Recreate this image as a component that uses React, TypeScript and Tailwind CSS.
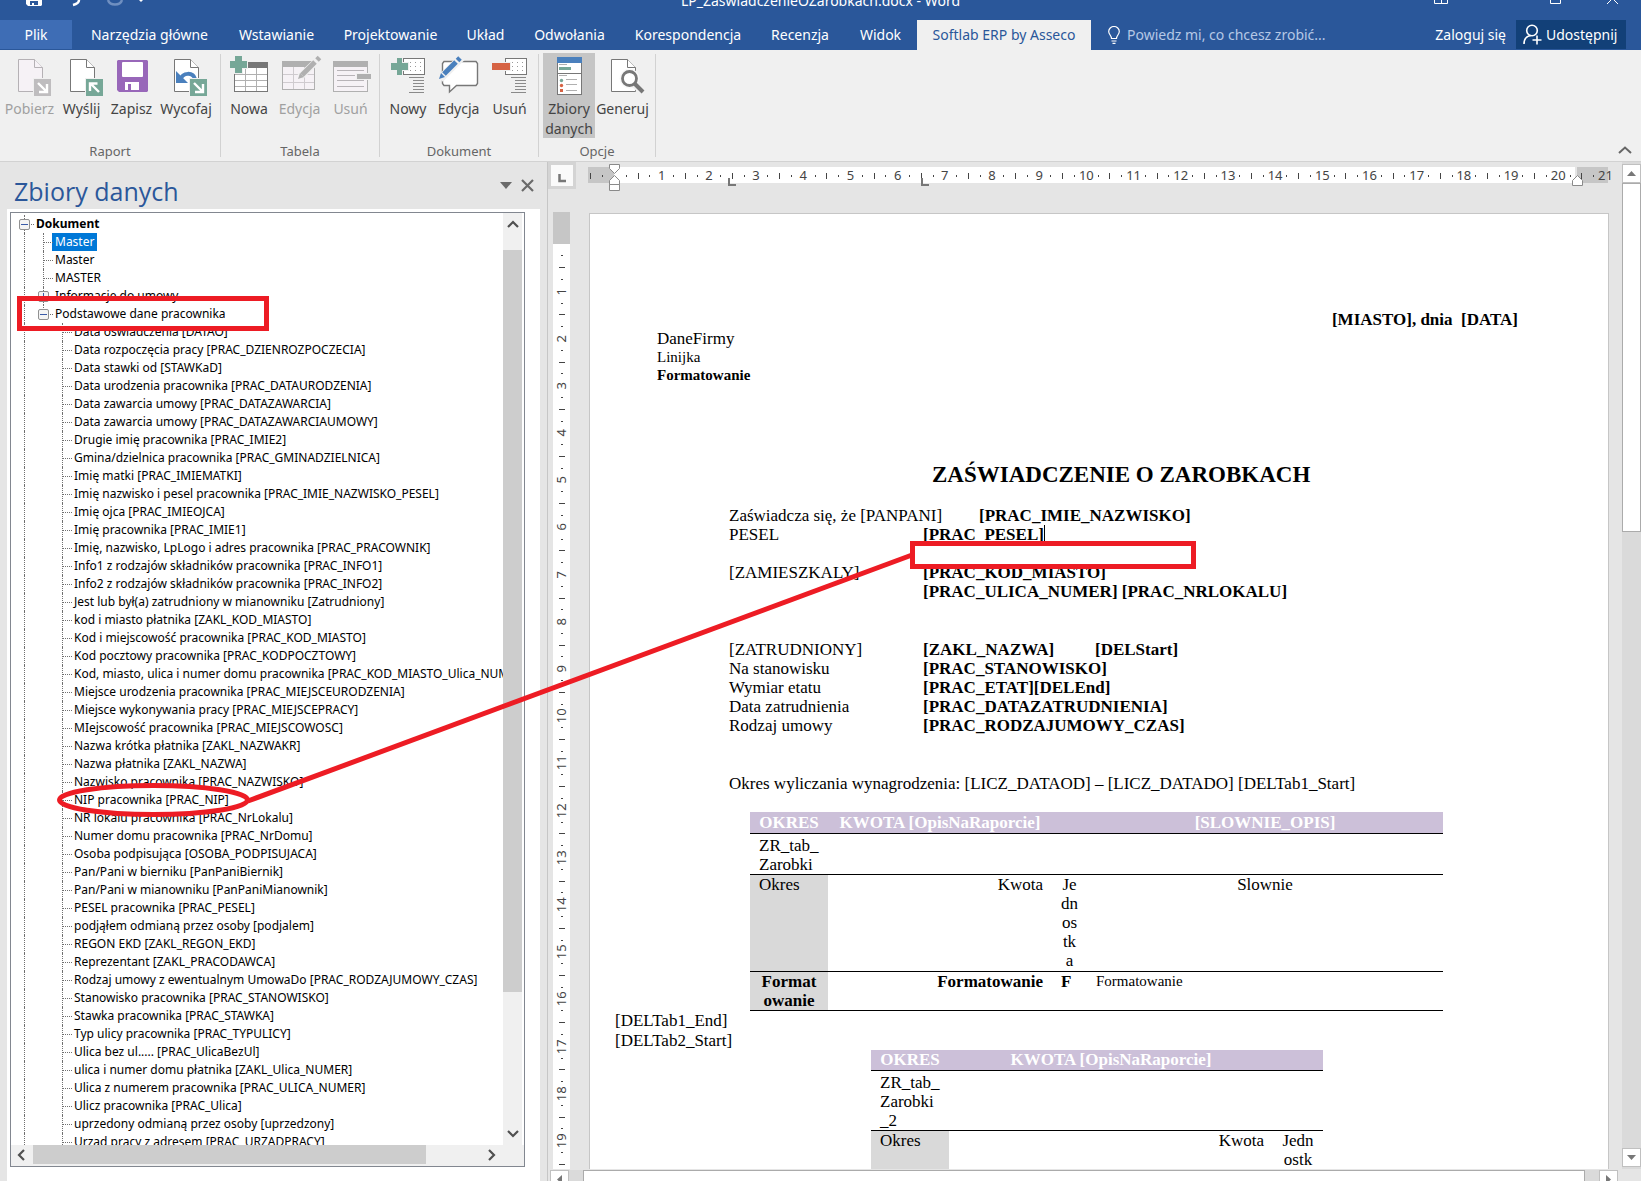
import { useState, type ReactNode } from "react";
import clsx from "clsx";

const ribbonTabs = [
  { name: "Narzędzia główne", width: "w-[149px]" },
  { name: "Wstawianie", width: "w-[105px]" },
  { name: "Projektowanie", width: "w-[123px]" },
  { name: "Układ", width: "w-[67px]" },
  { name: "Odwołania", width: "w-[101px]" },
  { name: "Korespondencja", width: "w-[136px]" },
  { name: "Recenzja", width: "w-[88px]" },
  { name: "Widok", width: "w-[73px]" },
];

const fields = [
  "Data oświadczenia [DATAO]",
  "Data rozpoczęcia pracy [PRAC_DZIENROZPOCZECIA]",
  "Data stawki od [STAWKaD]",
  "Data urodzenia pracownika [PRAC_DATAURODZENIA]",
  "Data zawarcia umowy [PRAC_DATAZAWARCIA]",
  "Data zawarcia umowy [PRAC_DATAZAWARCIAUMOWY]",
  "Drugie imię pracownika [PRAC_IMIE2]",
  "Gmina/dzielnica pracownika [PRAC_GMINADZIELNICA]",
  "Imię matki [PRAC_IMIEMATKI]",
  "Imię nazwisko i pesel pracownika [PRAC_IMIE_NAZWISKO_PESEL]",
  "Imię ojca [PRAC_IMIEOJCA]",
  "Imię pracownika [PRAC_IMIE1]",
  "Imię, nazwisko, LpLogo i adres pracownika [PRAC_PRACOWNIK]",
  "Info1 z rodzajów składników pracownika [PRAC_INFO1]",
  "Info2 z rodzajów składników pracownika [PRAC_INFO2]",
  "Jest lub był(a) zatrudniony w mianowniku [Zatrudniony]",
  "kod i miasto płatnika [ZAKL_KOD_MIASTO]",
  "Kod i miejscowość pracownika [PRAC_KOD_MIASTO]",
  "Kod pocztowy pracownika [PRAC_KODPOCZTOWY]",
  "Kod, miasto, ulica i numer domu pracownika [PRAC_KOD_MIASTO_Ulica_NUMER]",
  "Miejsce urodzenia pracownika [PRAC_MIEJSCEURODZENIA]",
  "Miejsce wykonywania pracy [PRAC_MIEJSCEPRACY]",
  "MIejscowość pracownika [PRAC_MIEJSCOWOSC]",
  "Nazwa krótka płatnika [ZAKL_NAZWAKR]",
  "Nazwa płatnika [ZAKL_NAZWA]",
  "Nazwisko pracownika [PRAC_NAZWISKO]",
  "NIP pracownika [PRAC_NIP]",
  "NR lokalu pracownika [PRAC_NrLokalu]",
  "Numer domu pracownika [PRAC_NrDomu]",
  "Osoba podpisująca [OSOBA_PODPISUJACA]",
  "Pan/Pani w bierniku [PanPaniBiernik]",
  "Pan/Pani w mianowniku [PanPaniMianownik]",
  "PESEL pracownika [PRAC_PESEL]",
  "podjąłem odmianą przez osoby [podjalem]",
  "REGON EKD [ZAKL_REGON_EKD]",
  "Reprezentant [ZAKL_PRACODAWCA]",
  "Rodzaj umowy z ewentualnym UmowaDo [PRAC_RODZAJUMOWY_CZAS]",
  "Stanowisko pracownika [PRAC_STANOWISKO]",
  "Stawka pracownika [PRAC_STAWKA]",
  "Typ ulicy pracownika [PRAC_TYPULICY]",
  "Ulica bez ul..... [PRAC_UlicaBezUl]",
  "ulica i numer domu płatnika [ZAKL_Ulica_NUMER]",
  "Ulica z numerem pracownika [PRAC_ULICA_NUMER]",
  "Ulicz pracownika [PRAC_Ulica]",
  "uprzedony odmianą przez osoby [uprzedzony]",
  "Urząd pracy z adresem [PRAC_URZADPRACY]",
];

/* ---------- icons ---------- */

function Icon({ children }: { children: ReactNode }) {
  return (
    <svg width="40" height="40" viewBox="0 0 40 40" fill="none" className="shrink-0 overflow-visible" aria-hidden="true">
      {children}
    </svg>
  );
}

function Sheet({ stroke = "#777777", fill = "#ffffff" }) {
  return (
    <g stroke={stroke} fill={fill}>
      <path d="M8.5 2.5h16l8 8v24h-24z" />
      <path d="M24.5 2.5v8h8" />
    </g>
  );
}

function ArrowBadge({ up = false, fill = "#76a797" }) {
  return (
    <g>
      <rect x="23" y="21" width="19" height="19" fill="#f0f0f0" />
      <rect x="24" y="22" width="17" height="17" fill={fill} />
      {up ? (
        <path d="M37 35l-8-8M28 34v-7.500h7.500" stroke="#fff" strokeWidth="2.400" />
      ) : (
        <path d="M28 26l8 8M37 27v8h-8" stroke="#fff" strokeWidth="2.400" />
      )}
    </g>
  );
}

const PobierzIcon = () => (
  <Icon>
    <Sheet stroke="#b5b1b5" fill="#f6f2f6" />
    <ArrowBadge fill="#bfbdbf" />
  </Icon>
);

const WyslijIcon = () => (
  <Icon>
    <Sheet />
    <ArrowBadge up />
  </Icon>
);

const ZapiszIcon = () => (
  <Icon>
    <path d="M6 3h29l1 1v30l-1 1H7l-2-2V4z" fill="#9867b9" />
    <rect x="10" y="5" width="21" height="15" rx="1" fill="#fff" />
    <path d="M13 25h14v8h-8v-6h-3v6h-3z" fill="#fff" />
  </Icon>
);

const WycofajIcon = () => (
  <Icon>
    <Sheet />
    <path d="M14 23c3-8 13-8 15-1" stroke="#4a80bd" strokeWidth="4" />
    <path d="M10 14v12h12z" fill="#4a80bd" />
    <ArrowBadge />
  </Icon>
);

const NowaIcon = () => (
  <Icon>
    <rect x="5.500" y="5.500" width="33" height="29" fill="#fff" stroke="#777" />
    <rect x="5" y="5" width="34" height="6" fill="#777" />
    <path d="M6 17.500h32M6 23.500h32M6 29.500h32M16.500 11v23M27.500 11v23" stroke="#b0b0b0" />
    <path d="M0 3h5v-5h9v5h5v9h-5v5H5v-5H0z" fill="#f0f0f0" />
    <path d="M1 4h5v-5h7v5h5v7h-5v5H6v-5H1z" fill="#76a797" />
  </Icon>
);

const EdycjaTabeliIcon = () => (
  <Icon>
    <rect x="2.500" y="4.500" width="32" height="28" fill="#f6f2f6" stroke="#b0b0b0" />
    <rect x="2" y="4" width="33" height="6" fill="#b0b0b0" />
    <path d="M3 17.500h31M3 25.500h31M13.500 10v22M24.500 10v22" stroke="#cfcbcf" />
    <path d="M20 20L40 1" stroke="#f0f0f0" strokeWidth="7" />
    <path d="M22 18L35 5M37 3l2.500-2.500" stroke="#b0b0b0" strokeWidth="5" />
    <path d="M18 22l2-6 4 4z" fill="#b0b0b0" />
  </Icon>
);

const UsunTabeleIcon = () => (
  <Icon>
    <rect x="2.500" y="4.500" width="34" height="30" fill="#f6f2f6" stroke="#b0b0b0" />
    <rect x="2" y="4" width="35" height="6" fill="#b0b0b0" />
    <path d="M6 13.500h27M6 18.500h18M6 23.500h27M6 29.500h27" stroke="#b8b4b8" />
    <rect x="25" y="16" width="16" height="7" fill="#f0f0f0" />
    <rect x="26" y="17" width="14" height="5" fill="#b0b0b0" />
  </Icon>
);

function Paragraph() {
  return (
    <g>
      <rect x="15.500" y="1.500" width="21" height="16" fill="#fff" stroke="#777" />
      <path d="M22 5.500h13M22 9.500h13M22 13.500h13" stroke="#999" strokeDasharray="1 4" />
      <path d="M21 20.500h15M25 23.500h11M25 26.500h11M25 29.500h11M25 32.500h11M21 35.500h15" stroke="#8a8a8a" />
    </g>
  );
}

const NowyIcon = () => (
  <Icon>
    <Paragraph />
    <path d="M2 5h6V0h7v5h6v9h-6v5H8v-5H2z" fill="#f0f0f0" />
    <path d="M3 6h6V1h5v5h6v7h-6v5H9v-5H3z" fill="#76a797" />
  </Icon>
);

const EdycjaIcon = () => (
  <Icon>
    <path d="M5 4.500h32l1.500 2v20l-1.500 2H17.500l-7 6.500v-6.500H5l-1.500-2v-20z" fill="#fff" stroke="#777" strokeWidth="1.400" />
    <path d="M1 22L23 0" stroke="#f0f0f0" strokeWidth="8" />
    <path d="M5 17L17 5M18.500 3.500L21 1" stroke="#4a80bd" strokeWidth="5" />
    <path d="M0 22l2-6 4 4z" fill="#4a80bd" />
  </Icon>
);

const UsunIcon = () => (
  <Icon>
    <Paragraph />
    <rect x="1" y="5" width="20" height="9" fill="#f0f0f0" />
    <rect x="2" y="6" width="18" height="7" fill="#d66344" />
  </Icon>
);

const ZbioryIcon = () => (
  <Icon>
    <rect x="8.500" y=".5" width="24" height="37" fill="#fff" stroke="#777" />
    <rect x="8" y="0" width="25" height="6" fill="#4a80bd" />
    <path d="M10 7.500h8M10 18.500h8M17 22.500h11M17 27.500h11M17 33.500h11" stroke="#b0b0b0" />
    <path d="M9 16.500h23" stroke="#777" />
    <rect x="10" y="10" width="12" height="3" fill="#76a797" />
    <circle cx="12.500" cy="23.500" r="1.700" fill="#76a797" />
    <circle cx="12.500" cy="28.500" r="1.700" fill="#d66344" />
    <rect x="11" y="32" width="3" height="3" fill="#d66344" />
  </Icon>
);

const GenerujIcon = () => (
  <Icon>
    <Sheet />
    <circle cx="26.500" cy="21.500" r="10" fill="#f8f8f8" />
    <path d="M31 27l9 8.500" stroke="#f0f0f0" strokeWidth="7" />
    <circle cx="26.500" cy="21.500" r="7" fill="#fff" stroke="#777" strokeWidth="2.800" />
    <path d="M31.500 26.500l8.500 8.500" stroke="#777" strokeWidth="4" />
  </Icon>
);

/* ---------- title bar and ribbon ---------- */

function TitleBar() {
  return (
    <div className="relative flex h-5 items-start justify-between text-white">
      <svg width="160" height="8" viewBox="0 0 160 8" fill="none" className="ml-[24px]" aria-hidden="true">
        <path d="M2 0h16v5l-1 1H4L2 4z" fill="#fff" />
        <path d="M6 1h8v4h-4V3H8v2H6z" fill="#2a579a" />
        <path d="M55 0c0 2-2 4-6 5" stroke="#fff" strokeWidth="2.500" />
        <path d="M84 0c2 6 12 6 14 0" stroke="#6f8fc0" strokeWidth="2.500" />
        <path d="M115 0h4l-2 2z" fill="#fff" />
      </svg>
      <div className="absolute inset-x-0 -top-[9px] text-center text-sm leading-[20px]">LP_ZaświadczenieOZarobkach.docx - Word</div>
      <svg width="190" height="6" viewBox="0 0 190 6" fill="none" stroke="#fff" className="mr-[19px]" aria-hidden="true">
        <path d="M2.500 0v3.500h13V0M9.500 0v3M118.500 0v3.500h10V0M175 4l5.500-5.500L186 4" />
      </svg>
    </div>
  );
}

function TabBar() {
  return (
    <nav className="flex h-[30px] items-stretch text-sm text-white">
      <button className="mb-px w-[72px] bg-[#3e6db5]">Plik</button>
      <div className="flex pl-[3px]">
        {ribbonTabs.map((t) => (
          <button key={t.name} className={clsx("whitespace-nowrap text-center", t.width)}>{t.name}</button>
        ))}
        <button className="w-[174px] whitespace-nowrap bg-[#f0f0f0] text-[#2a579a]">Softlab ERP by Asseco</button>
      </div>
      <label className="flex flex-1 items-center gap-[7px] pl-[17px]">
        <svg width="12" height="18" viewBox="0 0 12 18" fill="none" stroke="#fff" aria-label="Powiedz mi">
          <path d="M3.500 12.500C3.500 9.500.7 8.500.7 5.500a5.300 5 0 0110.600 0c0 3-2.800 4-2.800 7zM3.500 15h5M4.500 17.300h3" strokeWidth="1.200" />
        </svg>
        <input placeholder="Powiedz mi, co chcesz zrobić..." className="min-w-0 flex-1 bg-transparent outline-none placeholder:text-[#b5c8e6]" />
      </label>
      <button className="mr-[10px] whitespace-nowrap">Zaloguj się</button>
      <button className="mr-[15px] mb-px flex w-[110px] items-center gap-[3px] bg-[#124078] pl-[7px]">
        <svg width="20" height="21" viewBox="0 0 20 21" fill="none" stroke="#fff" strokeWidth="1.600" aria-hidden="true">
          <circle cx="9" cy="6.500" r="5.300" />
          <path d="M1 20c0-5 3-8 7-8.500M14 11.500v9M9.500 16h9" />
        </svg>
        Udostępnij
      </button>
    </nav>
  );
}

function RibbonButton({ icon, label, width, disabled, pressed }: { icon: ReactNode; label: string; width: string; disabled?: boolean; pressed?: boolean }) {
  return (
    <button
      disabled={disabled}
      aria-pressed={pressed}
      className={clsx("flex h-[85px] flex-col items-center pt-1 text-sm leading-[20px]", width, disabled ? "text-[#a0a0a0]" : "text-[#444444]", pressed && "bg-[#c5c5c5]")}
    >
      {icon}
      <span className="pt-[2px]">{label}</span>
    </button>
  );
}

function RibbonGroup({ name, className, children }: { name: string; className: string; children: ReactNode }) {
  return (
    <div className={clsx("my-1 flex flex-col justify-between border-r border-[#d2d2d2]", className)}>
      <div className="-mt-px flex">{children}</div>
      <div className="text-center text-[13px] leading-[12px] text-[#666666]">{name}</div>
    </div>
  );
}

function Ribbon() {
  return (
    <div className="flex h-[112px] border-b border-[#d2d2d2] bg-[#f0f0f0]">
      <RibbonGroup name="Raport" className="w-[221px] px-[3px]">
        <RibbonButton icon={<PobierzIcon />} label="Pobierz" width="w-[53px]" disabled />
        <RibbonButton icon={<WyslijIcon />} label="Wyślij" width="w-[51px]" />
        <RibbonButton icon={<ZapiszIcon />} label="Zapisz" width="w-[49px]" />
        <RibbonButton icon={<WycofajIcon />} label="Wycofaj" width="w-[60px]" />
      </RibbonGroup>
      <RibbonGroup name="Tabela" className="w-[159px] px-[3px]">
        <RibbonButton icon={<NowaIcon />} label="Nowa" width="w-[50px]" />
        <RibbonButton icon={<EdycjaTabeliIcon />} label="Edycja" width="w-[51px]" disabled />
        <RibbonButton icon={<UsunTabeleIcon />} label="Usuń" width="w-[51px]" disabled />
      </RibbonGroup>
      <RibbonGroup name="Dokument" className="w-[159px] px-[3px]">
        <RibbonButton icon={<NowyIcon />} label="Nowy" width="w-[50px]" />
        <RibbonButton icon={<EdycjaIcon />} label="Edycja" width="w-[51px]" />
        <RibbonButton icon={<UsunIcon />} label="Usuń" width="w-[51px]" />
      </RibbonGroup>
      <RibbonGroup name="Opcje" className="w-[117px] px-1">
        <RibbonButton icon={<ZbioryIcon />} label="Zbiory danych" width="w-[52px]" pressed />
        <RibbonButton icon={<GenerujIcon />} label="Generuj" width="w-[55px]" />
      </RibbonGroup>
      <button aria-label="Zwiń wstążkę" className="mr-[9px] mb-[7px] ml-auto self-end">
        <svg width="14" height="8" viewBox="0 0 14 8" fill="none" stroke="#666" strokeWidth="2">
          <path d="M1 7l6-5.500L13 7" />
        </svg>
      </button>
    </div>
  );
}

/* ---------- data set pane ---------- */

// One 19px step of indentation with its dotted connector.
function Guide({ branch, half, toggle }: { branch?: boolean; half?: boolean; toggle?: "+" | "-" }) {
  return (
    <span className="relative flex w-[19px] shrink-0 pl-[9px]">
      <span className={clsx("border-l border-dotted border-[#707070]", half ? "h-[9px]" : "h-full")} />
      {branch && <span className="flex-1 self-center border-t border-dotted border-[#707070]" />}
      {toggle && (
        <button aria-label={toggle === "-" ? "Zwiń" : "Rozwiń"} className="absolute top-[4px] left-[4px] flex size-[11px] rounded-[2px] border border-[#919191] bg-[#f4f4f4]">
          <svg width="9" height="9" viewBox="0 0 9 9" stroke="#3a5ba8" aria-hidden="true">
            <path d={toggle === "-" ? "M1 4.500h7" : "M1 4.500h7M4.500 1v7"} />
          </svg>
        </button>
      )}
    </span>
  );
}

function TreeRow({ label, guides, selected, bold, onSelect }: { label: string; guides: ReactNode; selected?: boolean; bold?: boolean; onSelect?: () => void }) {
  return (
    <li role="treeitem" aria-selected={!!selected} className="flex h-[18px] whitespace-nowrap">
      {guides}
      <button onClick={onSelect} className={clsx("-ml-px px-[3px] leading-[18px]", selected ? "bg-[#0078d7] text-white" : "text-black", bold && "font-bold")}>
        {label}
      </button>
    </li>
  );
}

function Tree() {
  const [selected, setSelected] = useState(0);
  const heads = ["Master", "Master", "MASTER"];

  return (
    <ul role="tree" aria-label="Zbiory danych" className="min-w-0 flex-1 overflow-hidden pt-[2px] pl-1 text-xs">
      <TreeRow label="Dokument" bold guides={<Guide branch toggle="-" />} />
      {heads.map((h, i) => (
        <TreeRow key={i} label={h} selected={selected === i} onSelect={() => setSelected(i)} guides={<><Guide /><Guide branch /></>} />
      ))}
      <TreeRow label="Informacje do umowy" selected={selected === 3} onSelect={() => setSelected(3)} guides={<><Guide /><Guide branch toggle="+" /></>} />
      <TreeRow label="Podstawowe dane pracownika" selected={selected === 4} onSelect={() => setSelected(4)} guides={<><Guide /><Guide branch half toggle="-" /></>} />
      {fields.map((f, i) => (
        <TreeRow
          key={f}
          label={f}
          selected={selected === i + 5}
          onSelect={() => setSelected(i + 5)}
          guides={<><Guide /><span className="w-[19px] shrink-0" /><Guide branch /></>}
        />
      ))}
    </ul>
  );
}

function Chevron({ d }: { d: string }) {
  return (
    <svg width="12" height="12" viewBox="0 0 12 12" fill="none" stroke="#505050" strokeWidth="2.200" aria-hidden="true">
      <path d={d} />
    </svg>
  );
}

function DataPane() {
  return (
    <aside className="flex w-[548px] shrink-0 flex-col border-r border-[#c6c6c6] pr-[7px] pl-[7px]">
      <div className="flex h-[47px] shrink-0 items-start justify-between pl-[7px]">
        <h2 className="pt-[12px] font-['Open_Sans',sans-serif] text-[25px] leading-[34px] text-[#2b579a]">Zbiory danych</h2>
        <div className="flex items-center gap-[9px] pt-[17px] pr-[6px]">
          <button aria-label="Opcje okienka">
            <svg width="12" height="7" viewBox="0 0 12 7" fill="#6a6a6a"><path d="M0 0h12L6 7z" /></svg>
          </button>
          <button aria-label="Zamknij">
            <svg width="13" height="13" viewBox="0 0 13 13" stroke="#6a6a6a" strokeWidth="2.200"><path d="M1 1l11 11M12 1L1 12" /></svg>
          </button>
        </div>
      </div>
      <div className="flex min-h-0 flex-1 bg-white pt-[3px] pr-[15px] pb-[14px] pl-[3px]">
        <div className="flex min-w-0 flex-1 flex-col border border-[#828790]">
          <div className="flex min-h-0 flex-1 pr-[2px]">
            <Tree />
            <div className="flex w-[19px] flex-col items-center bg-[#f0f0f0]">
              <button aria-label="W górę" className="h-[37px] pb-4"><Chevron d="M1 9l5-5 5 5" /></button>
              <div className="h-[742px] w-full bg-[#cdcdcd]" />
              <button aria-label="W dół" className="mt-auto pb-[5px]"><Chevron d="M1 3l5 5 5-5" /></button>
            </div>
          </div>
          <div className="flex h-[21px] shrink-0 items-center bg-[#f0f0f0] pr-[27px] pb-[2px] pl-[5px]">
            <button aria-label="W lewo"><Chevron d="M8 1L3 6l5 5" /></button>
            <div className="ml-[5px] h-full w-[393px] bg-[#cdcdcd]" />
            <button aria-label="W prawo" className="ml-auto"><Chevron d="M4 1l5 5-5 5" /></button>
          </div>
        </div>
      </div>
    </aside>
  );
}

/* ---------- rulers ---------- */

// Quarter-centimetre marks; whole centimetres carry their number.
function marks(from: number, to: number) {
  const list: number[] = [];
  for (let q = from; q <= to; q++) list.push(q);
  return list;
}

function HorizontalRuler() {
  return (
    <div className="relative mt-[5px] flex h-4 w-[1027px] text-[13px] text-[#444444]">
      <div className="ml-[3px] w-[26px] bg-[#c6c6c6]" />
      <div className="flex-1 bg-white" />
      <div className="mr-[4px] ml-[2px] w-[31px] bg-[#c6c6c6]" />
      <div className="absolute inset-0 flex items-center pt-[2px]">
        {marks(-2, 84).map((q) => (
          <span key={q} className="flex min-w-0 flex-1 items-center justify-center">
            {q === 0 ? null : q % 4 === 0 ? <span>{q / 4}</span> : q % 2 === 0 ? <span className="h-[6px] w-px bg-[#444444]" /> : <span className="h-[2px] w-px bg-[#444444]" />}
          </span>
        ))}
      </div>
      <svg width="1027" height="30" viewBox="0 0 1027 30" className="absolute top-[-4px] left-0" fill="#fff" stroke="#8a8a8a" aria-hidden="true">
        <path d="M24.500 1.500h10v4l-5 5-5-5zM24.500 21.500v-4l5-5 5 5v4zM24.500 21.500h10v6h-10z" />
        <path d="M987.500 22.500v-5l5-5 5 5v5z" />
        <path d="M144 15v7h7M337 15v7h7" fill="none" stroke="#777" strokeWidth="2" />
      </svg>
    </div>
  );
}

function VerticalRuler() {
  return (
    <div className="flex w-[17px] flex-col bg-white text-[13px] text-[#444444]">
      <div className="mb-px h-8 shrink-0 bg-[#c6c6c6]" />
      <div className="mt-[5px] flex h-[920px] shrink-0 flex-col">
        {marks(1, 78).map((q) => (
          <span key={q} className="flex min-h-0 flex-1 items-center justify-center">
            {q % 4 === 0 ? <span className="-rotate-90">{q / 4}</span> : q % 2 === 0 ? <span className="h-px w-[6px] bg-[#444444]" /> : <span className="h-px w-[2px] bg-[#444444]" />}
          </span>
        ))}
      </div>
    </div>
  );
}

/* ---------- document ---------- */

function Line({ label, value, wide, children }: { label?: string; value?: string; wide?: boolean; children?: ReactNode }) {
  return (
    <div className="flex h-[19px]">
      <span className={clsx("shrink-0", wide ? "w-[250px]" : "w-[194px]")}>{label}</span>
      <b>{value}</b>
      {children}
    </div>
  );
}

function IncomeTable() {
  return (
    <table className="ml-[135px] w-[693px] table-fixed border-collapse text-center leading-[19px]">
      <colgroup>
        <col className="w-[78px]" />
        <col className="w-[224px]" />
        <col className="w-[35px]" />
        <col />
      </colgroup>
      <thead>
        <tr className="h-[21px] border-b border-black bg-[#ccc0d9] text-white">
          <th className="p-0">OKRES</th>
          <th className="p-0">KWOTA [OpisNaRaporcie]</th>
          <th className="p-0" />
          <th className="p-0">[SLOWNIE_OPIS]</th>
        </tr>
      </thead>
      <tbody className="align-top">
        <tr className="h-[41px] border-b border-black">
          <td className="px-[9px] pt-[2px] pb-0 text-left">ZR_tab_<br />Zarobki</td>
          <td colSpan={3} />
        </tr>
        <tr className="h-[97px] border-b border-black">
          <td className="bg-[#d9d9d9] px-[9px] text-left">Okres</td>
          <td className="px-[9px] text-right">Kwota</td>
          <td>Je<br />dn<br />os<br />tk<br />a</td>
          <td>Slownie</td>
        </tr>
        <tr className="h-[39px] border-b border-black font-bold">
          <td className="bg-[#d9d9d9]">Format<br />owanie</td>
          <td className="px-[9px] text-right">Formatowanie</td>
          <td className="px-[9px] text-left">F</td>
          <td className="px-[9px] text-left text-[15px] font-normal">Formatowanie</td>
        </tr>
      </tbody>
    </table>
  );
}

function SecondTable() {
  return (
    <table className="ml-[256px] w-[452px] table-fixed border-collapse text-center leading-[19px]">
      <colgroup>
        <col className="w-[78px]" />
        <col />
        <col className="w-[50px]" />
      </colgroup>
      <thead>
        <tr className="h-[21px] border-b border-black bg-[#ccc0d9] text-white">
          <th className="p-0">OKRES</th>
          <th className="p-0">KWOTA [OpisNaRaporcie]</th>
          <th className="p-0" />
        </tr>
      </thead>
      <tbody className="align-top">
        <tr className="h-[60px] border-b border-black">
          <td className="px-[9px] pt-[2px] pb-0 text-left">ZR_tab_<br />Zarobki<br />_2</td>
          <td colSpan={2} />
        </tr>
        <tr className="h-[97px] border-b border-black">
          <td className="bg-[#d9d9d9] px-[9px] text-left">Okres</td>
          <td className="px-[9px] text-right">Kwota</td>
          <td>Jedn<br />ostk<br />a</td>
        </tr>
      </tbody>
    </table>
  );
}

function DocumentPage() {
  return (
    <article className="w-[1020px] shrink-0 border border-b-0 border-[#c6c6c6] bg-white px-[25px] pt-[96px] font-['Liberation_Serif',serif] text-[17px] leading-[19px] text-black">
      <p className="pr-[65px] text-right font-bold whitespace-pre">[MIASTO], dnia  [DATA]</p>
      <div className="pl-[42px]">
        <p>DaneFirmy</p>
        <p className="text-[15px] leading-[18px]">Linijka</p>
        <p className="text-[15px] leading-[18px] font-bold">Formatowanie</p>
      </div>
      <h1 className="pt-[78px] pl-[317px] text-[23px] leading-[26px] font-bold">ZAŚWIADCZENIE O ZAROBKACH</h1>
      <div className="flex flex-col pt-[18px] pl-[114px] whitespace-nowrap">
        <Line label="Zaświadcza się, że [PANPANI]" value="[PRAC_IMIE_NAZWISKO]" wide />
        <Line label="PESEL" value="[PRAC_PESEL]">
          <span className="h-[17px] w-px bg-black" />
        </Line>
        <Line />
        <Line label="[ZAMIESZKALY]" value="[PRAC_KOD_MIASTO]" />
        <Line value="[PRAC_ULICA_NUMER] [PRAC_NRLOKALU]" />
        <div className="flex h-[173px] flex-col pt-[39px]">
          <div className="flex">
            <span className="w-[194px]">[ZATRUDNIONY]</span>
            <b className="w-[172px]">[ZAKL_NAZWA]</b>
            <b>[DELStart]</b>
          </div>
          <Line label="Na stanowisku" value="[PRAC_STANOWISKO]" />
          <Line label="Wymiar etatu" value="[PRAC_ETAT][DELEnd]" />
          <Line label="Data zatrudnienia" value="[PRAC_DATAZATRUDNIENIA]" />
          <Line label="Rodzaj umowy" value="[PRAC_RODZAJUMOWY_CZAS]" />
        </div>
        <p>Okres wyliczania wynagrodzenia: [LICZ_DATAOD] – [LICZ_DATADO] [DELTab1_Start]</p>
      </div>
      <div className="pt-[19px]"><IncomeTable /></div>
      <p className="leading-[20px]">[DELTab1_End]</p>
      <p>[DELTab2_Start]</p>
      <SecondTable />
    </article>
  );
}

function DocumentArea() {
  return (
    <main className="flex min-w-0 flex-1 flex-col">
      <div className="flex min-h-0 flex-1">
        <div className="flex min-w-0 flex-1 flex-col overflow-hidden">
          <div className="flex h-[50px] shrink-0">
            <button aria-label="Tabulator" className="mr-[9px] h-[27px] w-[28px] shrink-0 border-[3px] border-[#d4d4d4] bg-[#fafafa] p-1">
              <svg width="14" height="14" viewBox="0 0 14 14" fill="none" stroke="#777" strokeWidth="2.500"><path d="M4.500 5v7H11" /></svg>
            </button>
            <HorizontalRuler />
          </div>
          <div className="flex min-h-0 flex-1 overflow-hidden pl-[5px]">
            <VerticalRuler />
            <div className="flex pt-px pl-[19px]"><DocumentPage /></div>
          </div>
        </div>
        <div className="flex w-[19px] flex-col bg-[#dadada]">
          <button aria-label="Przewiń w górę" className="mt-[2px] flex h-[19px] shrink-0 items-center justify-center border border-[#c0c0c0] bg-white">
            <svg width="9" height="5" viewBox="0 0 9 5" fill="#777"><path d="M0 5h9L4.500 0z" /></svg>
          </button>
          <div className="h-[349px] border border-[#ababab] bg-white" />
          <button aria-label="Przewiń w dół" className="mt-auto mb-[2px] flex h-[19px] shrink-0 items-center justify-center border border-[#c0c0c0] bg-white">
            <svg width="9" height="5" viewBox="0 0 9 5" fill="#777"><path d="M0 0h9L4.500 5z" /></svg>
          </button>
        </div>
      </div>
      <div className="flex h-3 shrink-0 overflow-hidden pt-px pr-[23px] pl-[2px]">
        <div className="flex flex-1 bg-[#dadada]">
          <button aria-label="Przewiń w lewo" className="flex h-[19px] w-[19px] items-center justify-center border border-[#c0c0c0] bg-white">
            <svg width="5" height="9" viewBox="0 0 5 9" fill="#777"><path d="M5 0v9L0 4.500z" /></svg>
          </button>
          <div className="mr-[14px] ml-[14px] h-[19px] flex-1 border border-[#ababab] bg-white" />
          <button aria-label="Przewiń w prawo" className="flex h-[19px] w-[19px] items-center justify-center border border-[#c0c0c0] bg-white">
            <svg width="5" height="9" viewBox="0 0 5 9" fill="#777"><path d="M0 0v9l5-4.500z" /></svg>
          </button>
        </div>
      </div>
    </main>
  );
}

// Red pen marks tying the NIP field to its place in the document.
function Annotations() {
  return (
    <svg width="1200" height="830" viewBox="0 0 1200 830" fill="none" stroke="#ed1c24" strokeWidth="5" className="pointer-events-none absolute top-0 left-0" aria-hidden="true">
      <rect x="19.500" y="298.500" width="247" height="30" />
      <rect x="912.500" y="543.500" width="281" height="23" />
      <ellipse cx="153.500" cy="800" rx="94" ry="14.500" />
      <path d="M248 801L912 555" />
    </svg>
  );
}

export default function App() {
  return (
    <div className="relative flex h-screen flex-col overflow-hidden bg-[#e5e5e5] font-['Noto_Sans',sans-serif]">
      <header className="shrink-0 bg-[#2a579a]">
        <TitleBar />
        <TabBar />
      </header>
      <Ribbon />
      <div className="flex min-h-0 flex-1">
        <DataPane />
        <DocumentArea />
      </div>
      <Annotations />
    </div>
  );
}
